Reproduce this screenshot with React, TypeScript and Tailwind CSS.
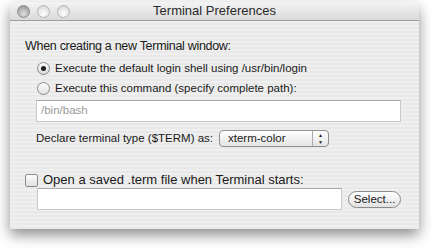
import React from "react";

function Light({ dark }: { dark?: boolean }) {
  return (
    <span
      className={
        dark
          ? "block w-[13px] h-[13px] rounded-full border border-[#8c8c8c] bg-[radial-gradient(circle_at_50%_70%,#e0e0e0_0%,#b4b4b4_50%,#8e8e8e_100%)]"
          : "block w-[13px] h-[13px] rounded-full border border-[#b5b5b5] bg-[radial-gradient(circle_at_50%_70%,#ffffff_0%,#ececec_45%,#cdcdcd_100%)]"
      }
    />
  );
}

export default function App() {
  return (
    <div
      className="w-[431px] h-[249px] bg-white pt-[2px] pl-[10px] text-[#1a1a1a]"
      style={{ fontFamily: '"Liberation Sans", Arial, sans-serif' }}
    >
      <div className="w-[409px] h-[227px] flex flex-col rounded-t-[6px] bg-[#ececec] shadow-[0_6px_14px_rgba(0,0,0,0.45)] overflow-hidden">
        {/* title bar */}
        <div className="h-[19px] relative flex items-center border-b border-[#9d9d9d] bg-[linear-gradient(#f4f4f4,#d9d9d9)]">
          <div className="flex gap-[7px] pl-[7px]">
            <Light dark />
            <Light />
            <Light />
          </div>
          <div className="absolute inset-0 flex items-center justify-center text-[13px] text-[#2a2a2a]">
            Terminal Preferences
          </div>
        </div>

        {/* body */}
        <div className="flex-1 flex flex-col pl-[15px] pr-[18px] bg-[repeating-linear-gradient(#efefef_0px,#efefef_2px,#e9e9e9_2px,#e9e9e9_4px)]">
          <div className="mt-[17px] text-[12.5px] leading-[16px] tracking-[-0.3px]">When creating a new Terminal window:</div>

          <div className="mt-[7px] pl-[12px] flex flex-col gap-[6px] text-[11.5px] leading-[14px]">
            <div className="flex items-center gap-[5px]">
              <span className="w-[13px] h-[13px] rounded-full border border-[#8a8a8a] bg-[linear-gradient(#fdfdfd,#d8d8d8)] flex items-center justify-center">
                <span className="w-[5px] h-[5px] rounded-full bg-[#222]" />
              </span>
              <span>Execute the default login shell using /usr/bin/login</span>
            </div>
            <div className="flex items-center gap-[5px]">
              <span className="w-[13px] h-[13px] rounded-full border border-[#8a8a8a] bg-[linear-gradient(#fdfdfd,#e2e2e2)]" />
              <span>Execute this command (specify complete path):</span>
            </div>
          </div>

          <div className="mt-[5px] ml-[11px] w-[365px] h-[22px] bg-white border border-[#c9c9c9] border-t-[#a9a9a9] flex items-center px-[4px] text-[11.5px] text-[#9a9a9a]">
            /bin/bash
          </div>

          <div className="mt-[8px] ml-[11px] flex items-center gap-[6px] text-[11.5px]">
            <span>Declare terminal type ($TERM) as:</span>
            <div className="w-[110px] h-[17px] rounded-[4px] border border-[#8f8f8f] bg-[linear-gradient(#ffffff,#e4e4e4)] flex items-center">
              <span className="flex-1 pl-[8px] leading-none">xterm-color</span>
              <span className="w-[16px] h-full border-l border-[#aaa] flex flex-col items-center justify-center gap-[2px] text-[5px] leading-none">
                <span>▲</span>
                <span>▼</span>
              </span>
            </div>
          </div>

          <div className="mt-[26px] h-[14px] flex items-center gap-[5px] text-[13px] leading-[14px]">
            <span className="w-[13px] h-[13px] rounded-[2px] border border-[#8a8a8a] bg-[linear-gradient(#fdfdfd,#e0e0e0)]" />
            <span>Open a saved .term file when Terminal starts:</span>
          </div>

          <div className="mt-[1px] ml-[12px] flex items-center gap-[6px]">
            <div className="w-[306px] h-[22px] bg-white border border-[#c9c9c9] border-t-[#a9a9a9]" />
            <div className="w-[53px] h-[17px] rounded-full border border-[#8a8a8a] bg-[linear-gradient(#ffffff,#e2e2e2)] flex items-center justify-center text-[11.5px]">
              Select...
            </div>
          </div>
        </div>
      </div>
    </div>
  );
}
